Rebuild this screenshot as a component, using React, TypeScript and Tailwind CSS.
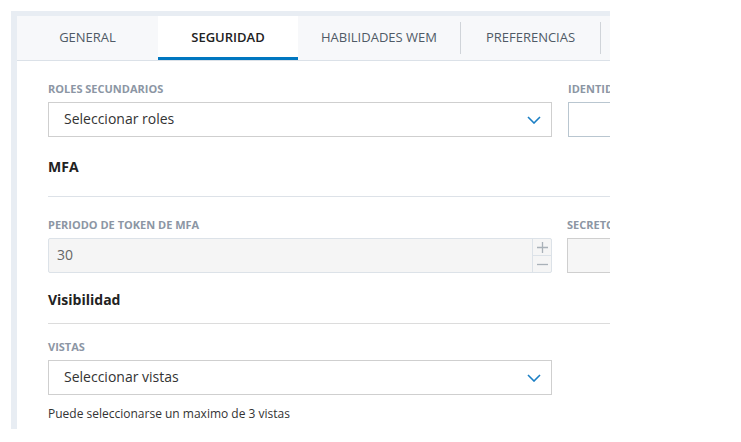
import React from "react";

const Chevron = () => (
  <svg width="14" height="8" viewBox="0 0 14 8" className="absolute right-[10px] top-[13px]">
    <path d="M1 1 L7 7 L13 1" fill="none" stroke="#1b7fc4" strokeWidth="1.6" />
  </svg>
);

const Label = ({ children }: { children: React.ReactNode }) => (
  <div className="h-[15px] leading-[15px] text-[11px] font-bold text-[#8c96a4] mb-[6px] whitespace-nowrap">{children}</div>
);

export default function App() {
  return (
    <div
      className="w-[741px] h-[442px] bg-white pt-[11px] pl-[11px]"
      style={{ fontFamily: '"Open Sans", "Noto Sans", sans-serif' }}
    >
      <div className="w-[599px] h-[418px] bg-[#e8edf3] pl-[6px] pt-[5px] overflow-hidden">
        <div className="w-[1100px] h-[600px] bg-white">
          {/* Tabs */}
          <div className="flex h-[45px] bg-[#f7f8fa] border-b border-[#dbe1e8] text-[13px]">
            <div className="w-[141px] h-[44px] flex items-center justify-center text-[#4f5a66]">GENERAL</div>
            <div className="w-[140px] h-[44px] flex items-center justify-center bg-white text-[#222] font-semibold border-b-[3px] border-[#0077c0] pt-[3px]">SEGURIDAD</div>
            <div className="w-[162px] h-[44px] flex items-center justify-center text-[#4f5a66]">HABILIDADES WEM</div>
            <div className="w-px h-[32px] mt-[6px] bg-[#d0d4d9]" />
            <div className="w-[139px] h-[44px] flex items-center justify-center text-[#4f5a66]">PREFERENCIAS</div>
            <div className="w-px h-[32px] mt-[6px] bg-[#d0d4d9]" />
            <div className="w-[140px] h-[44px]" />
          </div>

          {/* Content */}
          <div className="pl-[31px] pt-[20px]">
            <div className="grid grid-cols-[504px_504px] gap-x-4">
              <div>
                <Label>ROLES SECUNDARIOS</Label>
                <div className="relative h-[35px] border border-[#cfcfcf] pl-[15px] text-[14px] leading-[31px] text-[#333]">
                  Seleccionar roles
                  <Chevron />
                </div>
              </div>
              <div>
                <Label>IDENTIDAD</Label>
                <div className="h-[35px] border border-[#b9c6d0] bg-white" />
              </div>
            </div>

            <div className="mt-[20px] h-[20px] leading-[20px] text-[14px] font-bold text-[#222]">MFA</div>
            <div className="mt-[19px] h-px bg-[#dde2e8]" />

            <div className="mt-[20px] grid grid-cols-[504px_504px] gap-x-4">
              <div>
                <Label>PERIODO DE TOKEN DE MFA</Label>
                <div className="flex h-[35px] border border-[#dce2e8] bg-[#f5f5f5] rounded-[2px]">
                  <div className="flex-1 pl-[8px] text-[14px] leading-[31px] text-[#666]">30</div>
                  <div className="w-[19px] flex flex-col border-l border-[#dce2e8]">
                    <div className="flex-1 flex items-center justify-center border-b border-[#dce2e8]">
                      <svg width="11" height="11" viewBox="0 0 11 11"><path d="M5.5 0 V11 M0 5.5 H11" stroke="#a9b1b8" strokeWidth="1.3" /></svg>
                    </div>
                    <div className="flex-1 flex items-center justify-center">
                      <svg width="11" height="3" viewBox="0 0 11 3"><path d="M0 1.5 H11" stroke="#a9b1b8" strokeWidth="1.3" /></svg>
                    </div>
                  </div>
                </div>
              </div>
              <div className="-ml-px">
                <Label>SECRETO</Label>
                <div className="h-[35px] border border-[#cfcfcf] bg-[#f6f6f6]" />
              </div>
            </div>

            <div className="mt-[17px] h-[20px] leading-[20px] text-[14px] font-bold text-[#222]">Visibilidad</div>
            <div className="mt-[13px] h-px bg-[#dcdcdc]" />

            <div className="mt-[15px] w-[504px]">
              <Label>VISTAS</Label>
              <div className="relative h-[35px] border border-[#cfcfcf] pl-[15px] text-[14px] leading-[31px] text-[#333]">
                Seleccionar vistas
                <Chevron />
              </div>
            </div>
            <div className="mt-[10px] text-[12px] leading-[17px] text-[#333]">Puede seleccionarse un maximo de 3 vistas</div>
          </div>
        </div>
      </div>
    </div>
  );
}
